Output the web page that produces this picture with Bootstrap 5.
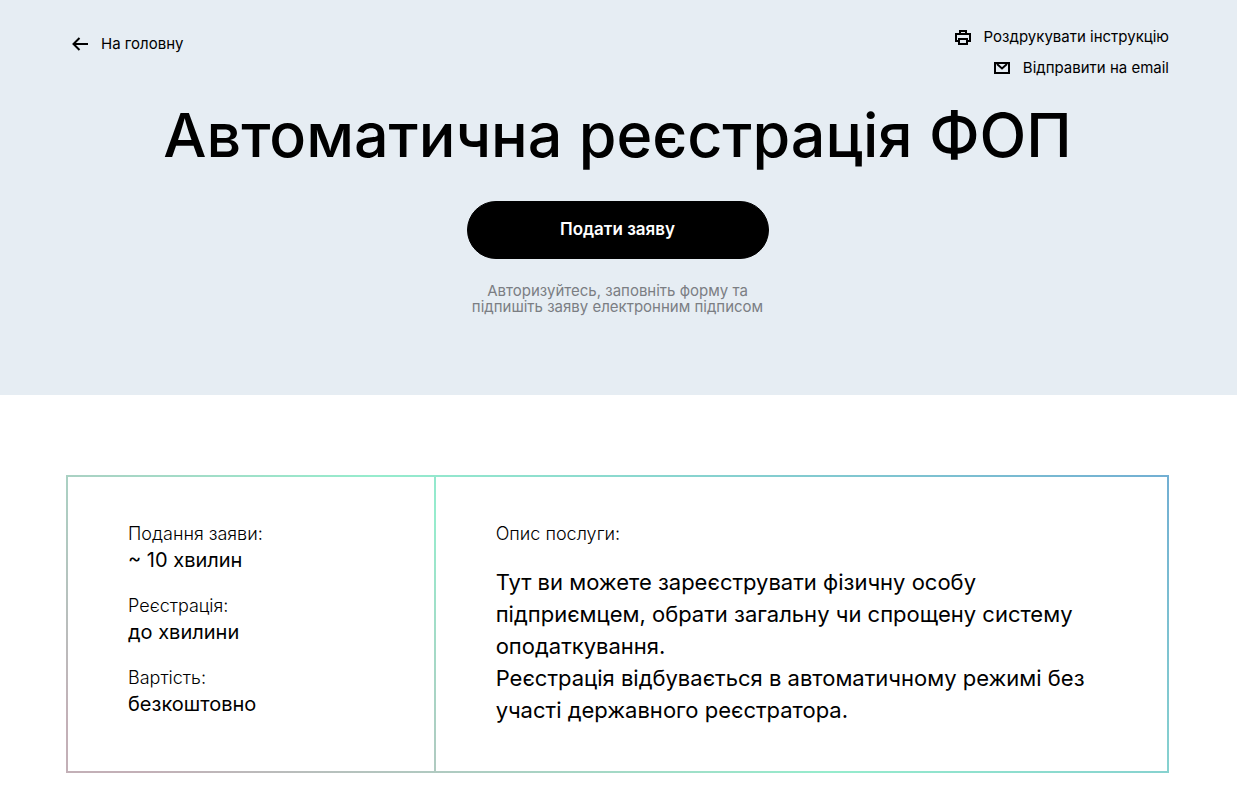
<!DOCTYPE html>
<html lang="uk">
<head>
<meta charset="utf-8">
<meta name="viewport" content="width=device-width, initial-scale=1">
<title>Автоматична реєстрація ФОП</title>
<link href="https://cdn.jsdelivr.net/npm/bootstrap@5.3.0/dist/css/bootstrap.min.css" rel="stylesheet">
<style>
  body { font-family: Inter, "Noto Sans", sans-serif; color: #000; background: #fff; }
  .page-wrap { padding-left: 66px; padding-right: 68px; }
  .hero { background: #e6edf3; padding-top: 26px; padding-bottom: 80px; }
  .hero-link { gap: 13px; color: #000; font-size: 15px; line-height: 21px; text-decoration: none; }
  .hero-link:hover { color: #000; text-decoration: underline; }
  .back-link { padding: 7px 0 0 6px; }
  .hero-actions { gap: 10px; }
  .hero-title { font-size: 61px; line-height: 72px; font-weight: 500; margin: 21px 0 30px; }
  .btn-apply {
    --bs-btn-color: #fff; --bs-btn-bg: #000; --bs-btn-border-color: #000;
    --bs-btn-hover-color: #fff; --bs-btn-hover-bg: #333;
    width: 302px; height: 58px; font-size: 17px; font-weight: 600;
  }
  .hint { max-width: 300px; font-size: 15px; line-height: 16px; color: #7b7e83; margin-top: 24px; }
  .service { margin-top: 80px; }
  .service-panel {
    display: grid; gap: 2px; padding: 2px;
    background: linear-gradient(33deg, #c3b0b7 5%, #96eccd 49%, #72afd3);
  }
  @media (min-width: 768px) { .service-panel { grid-template-columns: 1fr 2fr; } }
  .service-cell { background: #fff; padding: 44px 60px 45px; }
  .facts { gap: 20px; }
  .facts, .facts dd { margin: 0; }
  .facts dt, .about-label { font-size: 18px; line-height: 26px; font-weight: 300; margin: 0; }
  .facts dd { font-size: 20px; line-height: 26px; }
  .about-text { font-size: 22px; line-height: 32px; margin: 19px 0 0; }
</style>
</head>
<body>
<header class="hero">
  <div class="page-wrap">
    <div class="d-flex justify-content-between align-items-start">
      <a class="hero-link back-link d-flex align-items-center" href="#">
        <svg width="16" height="14" viewBox="0 0 16 14" fill="none" stroke="#000" stroke-width="2" aria-hidden="true"><path d="M16 7H2M7.500 1l-6 6 6 6"/></svg>
        На головну
      </a>
      <div class="hero-actions d-flex flex-column align-items-end">
        <a class="hero-link d-flex align-items-center" href="#">
          <svg width="16" height="16" viewBox="0 0 16 16" fill="none" stroke="#000" stroke-width="2" aria-hidden="true"><path d="M5 5V2h6v3M4 12H1V5h14v7h-3M4 10h8v5H4z"/></svg>
          Роздрукувати інструкцію
        </a>
        <a class="hero-link d-flex align-items-center" href="#">
          <svg width="16" height="12" viewBox="0 0 16 12" fill="none" stroke="#000" stroke-width="2" aria-hidden="true"><path d="M1 1h14v10H1zM3 2l5 4.500L13 2"/></svg>
          Відправити на email
        </a>
      </div>
    </div>
    <div class="text-center">
      <h1 class="hero-title">Автоматична реєстрація ФОП</h1>
      <button type="button" class="btn btn-apply rounded-pill">Подати заяву</button>
      <p class="hint mx-auto mb-0">Авторизуйтесь, заповніть форму та підпишіть заяву електронним підписом</p>
    </div>
  </div>
</header>
<main class="page-wrap service">
  <section class="service-panel">
    <div class="service-cell">
      <dl class="facts d-grid">
        <div><dt>Подання заяви:</dt><dd>~ 10 хвилин</dd></div>
        <div><dt>Реєстрація:</dt><dd>до хвилини</dd></div>
        <div><dt>Вартість:</dt><dd>безкоштовно</dd></div>
      </dl>
    </div>
    <div class="service-cell">
      <h2 class="about-label">Опис послуги:</h2>
      <p class="about-text">Тут ви можете зареєструвати фізичну особу підприємцем, обрати загальну чи спрощену систему оподаткування.<br>Реєстрація відбувається в автоматичному режимі без участі державного реєстратора.</p>
    </div>
  </section>
</main>
<script src="https://cdn.jsdelivr.net/npm/bootstrap@5.3.0/dist/js/bootstrap.bundle.min.js"></script>
</body>
</html>
